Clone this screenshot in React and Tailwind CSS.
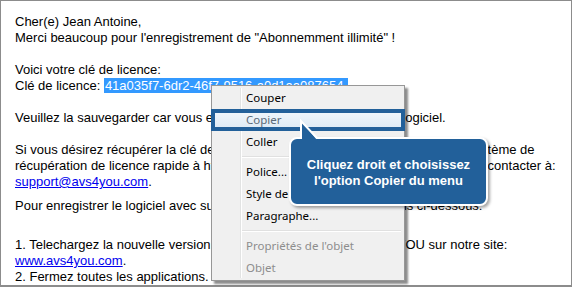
const ITEMS = [
  { label: 'Couper' },
  { label: 'Copier', active: true },
  { label: 'Coller' },
  { sep: true },
  { label: 'Police...' },
  { label: 'Style de' },
  { label: 'Paragraphe...' },
  { sep: true },
  { label: "Propriétés de l'objet", disabled: true },
  { label: 'Objet', disabled: true },
];

function ContextMenu() {
  return (
    <div
      className="absolute left-[211px] top-[85px] w-[194px] bg-[#f0f0f0] border border-[#979797] py-px shadow-[3px_3px_2px_rgba(0,0,0,0.45)]"
      style={{ fontFamily: '"Noto Sans", "Open Sans", sans-serif' }}
    >
      {/* icon gutter line */}
      <div className="absolute left-[28px] top-[2px] bottom-[2px] w-[2px] border-l border-[#e2e3e3] bg-white" />
      {ITEMS.map((it, i) =>
        it.sep ? (
          <div key={i} className="h-[8px] flex items-center pl-[30px] pr-[3px]">
            <div className="h-[2px] w-full border-t border-[#e0e0e0] bg-white" />
          </div>
        ) : (
          <div
            key={i}
            className={`relative h-[22px] flex items-center pl-[34px] text-[11.5px] ${
              it.disabled ? 'text-[#8d8d8d]' : it.active ? 'text-[#5b6a78]' : 'text-black'
            }`}
          >
            {it.active && (
              <div className="absolute -left-px -right-px inset-y-0 border-4 border-[#22609a] bg-gradient-to-b from-[#eef5fb] to-[#dfebf5]" />
            )}
            <span className="relative">{it.label}</span>
          </div>
        )
      )}
    </div>
  );
}

function Callout() {
  return (
    <>
      <div
        className="absolute left-[289px] top-[137px] w-[199px] h-[69px] rounded-[8px] bg-[#22609a] border-2 border-white shadow-[2px_2px_3px_rgba(0,0,0,0.35)] flex flex-col items-center justify-center pt-[2px] text-white text-[13px] font-bold leading-[16px]"
        style={{ fontFamily: '"Liberation Sans", Arial, sans-serif' }}
      >
        <div>Cliquez droit et choisissez</div>
        <div>l'option Copier du menu</div>
      </div>
      <svg className="absolute left-[296px] top-[116px]" width="26" height="26" viewBox="0 0 26 26">
        <polygon points="5,5 5,25 22,25" fill="#22609a" />
        <polyline points="5,23 5,5 21,22" fill="none" stroke="white" strokeWidth="2" />
      </svg>
    </>
  );
}

export default function App() {
  return (
    <div className="relative w-[572px] h-[288px] overflow-hidden bg-white">
      <div
        className="h-[287px] border border-[#8c8c8c] border-b-2 pt-[13px] pl-[14px] text-[13px] leading-[16px] text-black whitespace-nowrap"
        style={{ fontFamily: '"Liberation Sans", Arial, sans-serif' }}
      >
        <div>Cher(e) Jean Antoine,</div>
        <div>Merci beaucoup pour l'enregistrement de "Abonnemment illimité" !</div>

        <div className="mt-4">Voici votre clé de licence:</div>
        <div>
          Clé de licence: <span className="bg-[#3399ff] text-white pl-px pr-[5px]">41a035f7-6dr2-46f7-9516-a0d1aa087654</span>
        </div>

        <div className="mt-4">Veuillez la sauvegarder car vous en aurez besoin pour réactiver le&nbsp; logiciel.</div>

        <div className="mt-4">Si vous désirez récupérer la clé de licence perdue,&nbsp;&nbsp; vous pouvez utiliser notre système de</div>
        <div>récupération de licence rapide à https://www.avs4you.com/, ou vous pouvez nous contacter à:</div>
        <div>
          <a className="text-[#0000ee] underline">support@avs4you.com</a>.
        </div>

        <div className="mt-2">Pour enregistrer le logiciel avec succès, suivez toutes les instructions ci-dessous:</div>

        <div className="mt-[23px]">1. Telechargez la nouvelle version du programme de la suite AVS4YOU sur notre site:</div>
        <div>
          <a className="text-[#0000ee] underline">www.avs4you.com</a>.
        </div>
        <div>2. Fermez toutes les applications.</div>
      </div>

      <ContextMenu />
      <Callout />
    </div>
  );
}
